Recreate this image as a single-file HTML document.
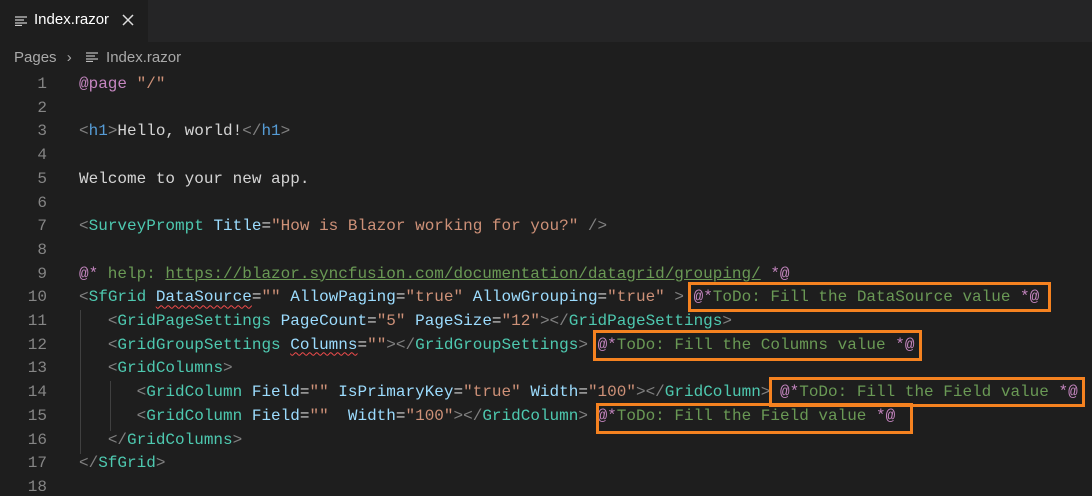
<!DOCTYPE html>
<html><head><meta charset="utf-8"><style>
body{margin:0;width:1092px;height:483px;background:#1e1e1e;overflow:hidden;position:relative;font-family:"Liberation Sans",sans-serif}
.tabbar{position:absolute;left:0;top:0;width:1092px;height:42px;background:#252526}
.tab{position:absolute;left:0;top:0;width:148px;height:42px;background:#1e1e1e;color:#fff;font-size:15px}
.crumb{position:absolute;left:14px;top:49px;color:#a9a9a9;font-size:15px}
.ln{position:absolute;width:47px;text-align:right;left:0;color:#858585;font:16px "Liberation Mono",monospace}
.code{position:absolute;left:79px;color:#d4d4d4;font:16px "Liberation Mono",monospace;white-space:pre}
.p{color:#808080}.t{color:#4ec9b0}.h{color:#569cd6}.a{color:#9cdcfe}.s{color:#ce9178}.k{color:#c586c0}.c{color:#6a9955}
.sq{text-decoration:underline wavy #f14c4c;text-decoration-thickness:1px;text-underline-offset:3px}
.box{position:absolute;border:3px solid #f58220;box-sizing:border-box}
.g{position:absolute;width:1px;background:#404040}
</style></head><body>
<div class="tabbar"><div class="tab">
<svg style="position:absolute;left:15px;top:16px" width="12" height="10"><path d="M0 1h12M0 4h9M0 7h12M0 9.5h7" stroke="#ccc" stroke-width="1.3"/></svg>
<span style="position:absolute;left:34px;top:11px">Index.razor</span>
<svg style="position:absolute;left:122px;top:14px" width="12" height="12"><path d="M1 1L11 11M11 1L1 11" stroke="#ddd" stroke-width="1.5"/></svg>
</div></div>
<div class="crumb">Pages <span style="display:inline-block;margin:0 6px">&#8250;</span>
<svg width="12" height="10" style="margin:0 4px 0 4px"><path d="M0 1h12M0 4h9M0 7h12M0 9.5h7" stroke="#bbb" stroke-width="1.3"/></svg> Index.razor</div>
<div class="g" style="left:80px;top:310px;height:144px"></div>
<div class="g" style="left:110px;top:381px;height:50px"></div>
<div id="c"></div>
<div class="box" style="left:688px;top:282px;width:363px;height:30px"></div>
<div class="box" style="left:593px;top:330px;width:329px;height:31px"></div>
<div class="box" style="left:769px;top:377px;width:316px;height:30px"></div>
<div class="box" style="left:596px;top:403px;width:317px;height:31px"></div>
<script>
var L=[
'<span class="k">@page</span> <span class="s">"/"</span>',
'',
'<span class="p">&lt;</span><span class="h">h1</span><span class="p">&gt;</span>Hello, world!<span class="p">&lt;/</span><span class="h">h1</span><span class="p">&gt;</span>',
'',
'Welcome to your new app.',
'',
'<span class="p">&lt;</span><span class="t">SurveyPrompt</span> <span class="a">Title</span>=<span class="s">"How is Blazor working for you?"</span> <span class="p">/&gt;</span>',
'',
'<span class="k">@*</span><span class="c"> help: <u>https://blazor.syncfusion.com/documentation/datagrid/grouping/</u> </span><span class="k">*@</span>',
'<span class="p">&lt;</span><span class="t">SfGrid</span> <span class="a sq">DataSource</span>=<span class="s">""</span> <span class="a">AllowPaging</span>=<span class="s">"true"</span> <span class="a">AllowGrouping</span>=<span class="s">"true"</span> <span class="p">&gt;</span> <span class="k">@*</span><span class="c">ToDo: Fill the DataSource value </span><span class="k">*@</span>',
'   <span class="p">&lt;</span><span class="t">GridPageSettings</span> <span class="a">PageCount</span>=<span class="s">"5"</span> <span class="a">PageSize</span>=<span class="s">"12"</span><span class="p">&gt;&lt;/</span><span class="t">GridPageSettings</span><span class="p">&gt;</span>',
'   <span class="p">&lt;</span><span class="t">GridGroupSettings</span> <span class="a sq">Columns</span>=<span class="s">""</span><span class="p">&gt;&lt;/</span><span class="t">GridGroupSettings</span><span class="p">&gt;</span> <span class="k">@*</span><span class="c">ToDo: Fill the Columns value </span><span class="k">*@</span>',
'   <span class="p">&lt;</span><span class="t">GridColumns</span><span class="p">&gt;</span>',
'      <span class="p">&lt;</span><span class="t">GridColumn</span> <span class="a">Field</span>=<span class="s">""</span> <span class="a">IsPrimaryKey</span>=<span class="s">"true"</span> <span class="a">Width</span>=<span class="s">"100"</span><span class="p">&gt;&lt;/</span><span class="t">GridColumn</span><span class="p">&gt;</span> <span class="k">@*</span><span class="c">ToDo: Fill the Field value </span><span class="k">*@</span>',
'      <span class="p">&lt;</span><span class="t">GridColumn</span> <span class="a">Field</span>=<span class="s">""</span>  <span class="a">Width</span>=<span class="s">"100"</span><span class="p">&gt;&lt;/</span><span class="t">GridColumn</span><span class="p">&gt;</span> <span class="k">@*</span><span class="c">ToDo: Fill the Field value </span><span class="k">*@</span>',
'   <span class="p">&lt;/</span><span class="t">GridColumns</span><span class="p">&gt;</span>',
'<span class="p">&lt;/</span><span class="t">SfGrid</span><span class="p">&gt;</span>',
''];
var h='';
for(var i=0;i<L.length;i++){var y=75+i*23.7;
h+='<div class="ln" style="top:'+y+'px">'+(i+1)+'</div><div class="code" style="top:'+y+'px">'+L[i]+'</div>';}
document.getElementById('c').innerHTML=h;
</script>
</body></html>
